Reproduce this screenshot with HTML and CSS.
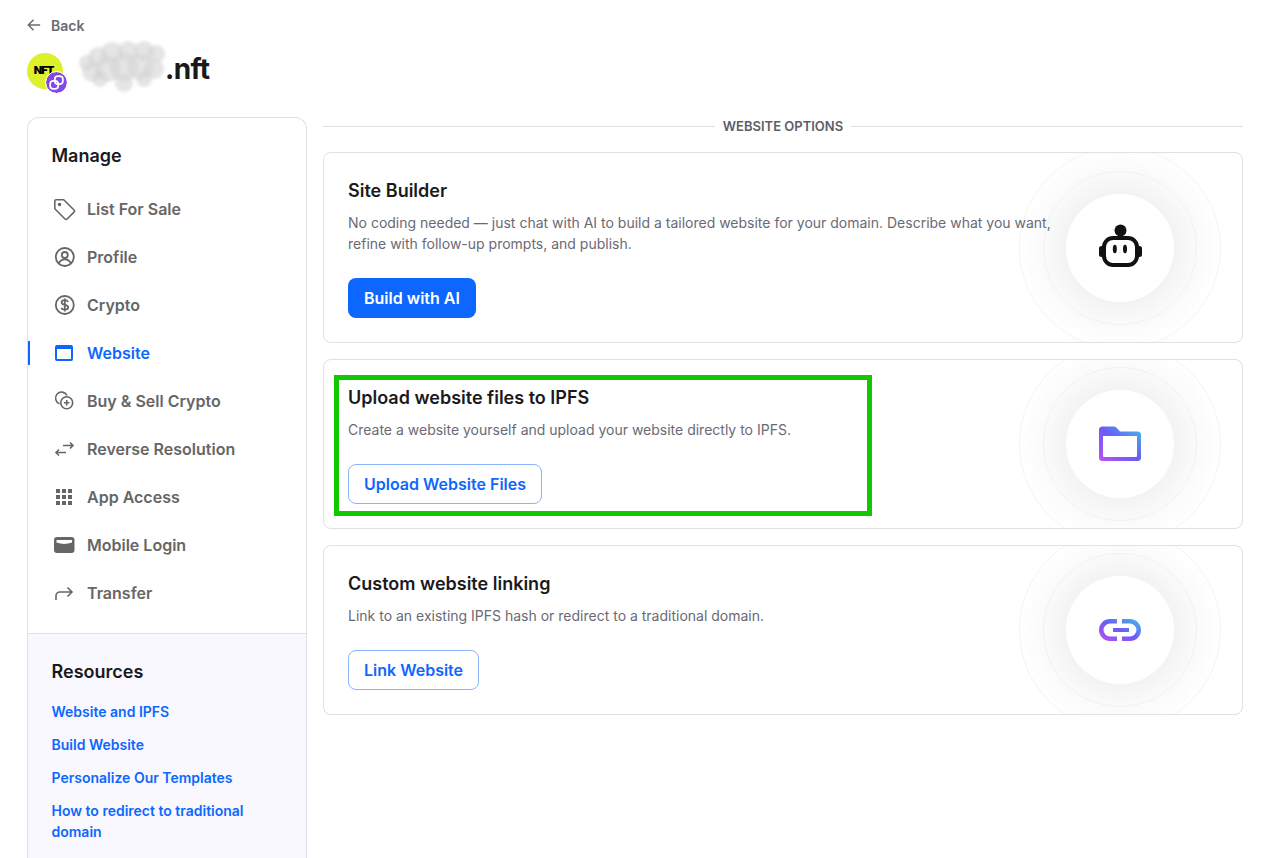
FILE: index.html
```html
<!DOCTYPE html>
<html>
  <head>
    <title>Website options</title>
    <link rel="stylesheet" href="styles.css">
  </head>
  <body>
    <div class="page">
      <a class="back">
        <svg viewBox="0 0 16 16" fill="none" stroke="currentColor" stroke-width="1.700">
          <path d="M15 8H1.500M7.500 2L1.500 8l6 6" />
        </svg>
        Back
      </a>
      <div class="domain-head">
        <span class="avatar">
          <span class="avatar-text">NFT</span>
          <span class="chain-badge">
            <svg viewBox="0 0 20 20" fill="none" stroke="#fff" stroke-width="2">
              <rect x="2.500" y="8" width="9.500" height="9.500" rx="3.800" />
              <rect x="8" y="2.500" width="9.500" height="9.500" rx="3.800" />
            </svg>
          </span>
        </span>
        <!-- blurred domain name -->
        <svg class="name-blur" viewBox="0 0 90 52">
          <g fill="#d4d4d4" fill-opacity="0.6">
            <circle cx="9" cy="22" r="8" />
            <circle cx="20" cy="16" r="10" />
            <circle cx="34" cy="12" r="11" />
            <circle cx="50" cy="10" r="10" />
            <circle cx="66" cy="10" r="10" />
            <circle cx="78" cy="13" r="9" />
            <circle cx="14" cy="31" r="10" />
            <circle cx="30" cy="28" r="13" />
            <circle cx="46" cy="26" r="14" />
            <circle cx="62" cy="26" r="13" />
            <circle cx="76" cy="28" r="10" />
            <circle cx="22" cy="38" r="8" />
            <circle cx="46" cy="42" r="9" />
            <circle cx="66" cy="38" r="8" />
          </g>
        </svg>
        <h1>.nft</h1>
      </div>

      <div class="layout">
        <aside class="sidebar">
          <div class="manage">
            <h3>Manage</h3>
            <a class="nav-item">
              <svg viewBox="0 0 24 24" fill="none" stroke="currentColor" stroke-width="1.600" stroke-linejoin="round">
                <path d="M2.800 4.300A1.500 1.500 0 0 1 4.300 2.800h7.400l10.300 10.200a1.500 1.500 0 0 1 0 2.100l-6.900 6.900a1.500 1.500 0 0 1-2.100 0L2.800 11.800z" />
                <circle cx="7.500" cy="7.500" r="1" fill="currentColor" />
              </svg>
              List For Sale
            </a>
            <a class="nav-item">
              <svg viewBox="0 0 24 24" fill="none" stroke="currentColor" stroke-width="1.800">
                <circle cx="12.800" cy="12" r="9" />
                <circle cx="12.800" cy="10" r="3" />
                <path d="M6.800 18.500c1-2.800 3.200-4.200 6-4.200s5 1.400 6 4.200" />
              </svg>
              Profile
            </a>
            <a class="nav-item">
              <svg viewBox="0 0 24 24" fill="none" stroke="currentColor" stroke-width="1.800">
                <circle cx="12.800" cy="12" r="9" />
                <path d="M16 9c-.5-1.200-1.700-1.800-3.200-1.800-1.900 0-3.200 1-3.200 2.300 0 3.300 6.600 1.500 6.600 4.800 0 1.400-1.500 2.400-3.400 2.400-1.700 0-3-.7-3.500-1.900M12.800 5.500v13" />
              </svg>
              Crypto
            </a>
            <a class="nav-item active">
              <svg viewBox="0 0 24 24" fill="currentColor">
                <path fill-rule="evenodd" d="M5 4h14a2 2 0 0 1 2 2v12a2 2 0 0 1-2 2H5a2 2 0 0 1-2-2V6a2 2 0 0 1 2-2zm0 4v9.500c0 .3.200.5.500.5h13c.3 0 .5-.2.500-.5V8z" />
              </svg>
              Website
            </a>
            <a class="nav-item">
              <svg viewBox="0 0 24 24" fill="none" stroke="currentColor" stroke-width="1.600">
                <path d="M7.500 14.700a6 6 0 1 1 7.500-8.200" />
                <circle cx="14.700" cy="13.800" r="6" />
                <path d="M14.700 11v5.600M11.900 13.800h5.600" />
              </svg>
              Buy &amp; Sell Crypto
            </a>
            <a class="nav-item">
              <svg viewBox="0 0 24 24" fill="none" stroke="currentColor" stroke-width="1.600">
                <path d="M11 8.500h10M18 5.500l3 3-3 3" />
                <path d="M14 15.500H4M7 12.500l-3 3 3 3" />
              </svg>
              Reverse Resolution
            </a>
            <a class="nav-item">
              <svg viewBox="0 0 24 24" fill="currentColor">
                <path d="M4 4h4v4H4zM10 4h4v4h-4zM16 4h4v4h-4zM4 10h4v4H4zM10 10h4v4h-4zM16 10h4v4h-4zM4 16h4v4H4zM10 16h4v4h-4zM16 16h4v4h-4z" />
              </svg>
              App Access
            </a>
            <a class="nav-item">
              <svg viewBox="0 0 24 24" fill="currentColor">
                <path fill-rule="evenodd" d="M5 4h14.500a3 3 0 0 1 3 3v10a3 3 0 0 1-3 3H5a3 3 0 0 1-3-3V7a3 3 0 0 1 3-3zM4.500 7v2.500c2.500.4 5.200 1.500 7.700 1.500s5.300-1.100 7.800-1.500V7z" />
              </svg>
              Mobile Login
            </a>
            <a class="nav-item">
              <svg viewBox="0 0 24 24" fill="none" stroke="currentColor" stroke-width="1.600">
                <path d="M4 19v-4a4 4 0 0 1 4-4h12M15.500 6.500L20 11l-4.500 4.500" />
              </svg>
              Transfer
            </a>
          </div>
          <div class="resources">
            <h3>Resources</h3>
            <a>Website and IPFS</a>
            <a>Build Website</a>
            <a>Personalize Our Templates</a>
            <a>How to redirect to traditional domain</a>
          </div>
        </aside>

        <main class="content">
          <div class="section-label"><span>WEBSITE OPTIONS</span></div>

          <section class="option-card tall">
            <div class="rings"><span class="ring-mid"></span><span class="ring-inner">
              <svg class="option-icon" viewBox="0 0 48 48">
                <circle cx="24.500" cy="6.500" r="6" fill="#111" />
                <rect x="23" y="10" width="3" height="5" fill="#111" />
                <rect x="3" y="22" width="5" height="11" rx="2.500" fill="#111" />
                <rect x="41" y="22" width="5" height="11" rx="2.500" fill="#111" />
                <rect x="8" y="14" width="33" height="27" rx="9" fill="#fff" stroke="#111" stroke-width="4" />
                <ellipse cx="18.800" cy="25" rx="2" ry="4.200" fill="#111" />
                <ellipse cx="29" cy="25" rx="2" ry="4.200" fill="#111" />
              </svg>
            </span></div>
            <div class="option-body">
              <h2>Site Builder</h2>
              <p>No coding needed — just chat with AI to build a tailored website for your domain. Describe what you want, refine with follow-up prompts, and publish.</p>
              <a class="btn primary">Build with AI</a>
            </div>
          </section>

          <section class="option-card">
            <div class="rings"><span class="ring-mid"></span><span class="ring-inner">
              <svg class="option-icon" viewBox="0 0 48 48" fill="none">
                <defs>
                  <linearGradient id="grad-folder" x1="0" y1="1" x2="1" y2="0">
                    <stop offset="0" stop-color="#c04ff0" />
                    <stop offset="0.5" stop-color="#6a5cf5" />
                    <stop offset="1" stop-color="#3fc0e8" />
                  </linearGradient>
                </defs>
                <path fill="url(#grad-folder)" fill-rule="evenodd" d="M3 10a3.500 3.500 0 0 1 3.500-3.500h11c1.200 0 2.200.5 3 1.300L24 11.500h17.500A3.500 3.500 0 0 1 45 15v22.500a3.500 3.500 0 0 1-3.500 3.500h-35A3.500 3.500 0 0 1 3 37.500zm4 6v20a1 1 0 0 0 1 1h32a1 1 0 0 0 1-1V16z" />
              </svg>
            </span></div>
            <div class="option-body">
              <h2>Upload website files to IPFS</h2>
              <p>Create a website yourself and upload your website directly to IPFS.</p>
              <a class="btn outline">Upload Website Files</a>
            </div>
            <div class="highlight"></div>
          </section>

          <section class="option-card">
            <div class="rings"><span class="ring-mid"></span><span class="ring-inner">
              <svg class="option-icon" viewBox="0 0 48 48" fill="none">
                <defs>
                  <linearGradient id="grad-link" x1="0" y1="1" x2="1" y2="0">
                    <stop offset="0" stop-color="#c04ff0" />
                    <stop offset="0.5" stop-color="#6a5cf5" />
                    <stop offset="1" stop-color="#3fc0e8" />
                  </linearGradient>
                </defs>
                <path fill="url(#grad-link)" d="M14 13h7v4.500h-7a6.500 6.500 0 0 0 0 13h7V35h-7a11 11 0 0 1 0-22zM26 13h8a11 11 0 0 1 0 22h-8v-4.500h8a6.500 6.500 0 0 0 0-13h-8zM17 22h16v4H17z" />
              </svg>
            </span></div>
            <div class="option-body">
              <h2>Custom website linking</h2>
              <p>Link to an existing IPFS hash or redirect to a traditional domain.</p>
              <a class="btn outline">Link Website</a>
            </div>
          </section>
        </main>
      </div>
    </div>
  </body>
</html>
```

FILE: styles.css
```css
:root {
  --blue: #0d67fe;
  --border: #e0e0e6;
  --text: #1a1a1c;
  --text-light: #6a6a75;
  --nav: #666666;
}

html,
body {
  height: 100%;
  margin: 0;
  background: #fff;
  font-family: "Inter", "Liberation Sans", sans-serif;
  color: var(--text);
}

.page {
  display: flex;
  flex-direction: column;
  height: 100vh;
  box-sizing: border-box;
  padding: 15px 34px 0 27px;
}

.back {
  display: flex;
  align-items: center;
  gap: 10px;
  height: 20px;
  font-size: 14px;
  font-weight: 600;
  color: var(--text-light);
}
.back svg {
  width: 14px;
  height: 14px;
}

.domain-head {
  display: flex;
  align-items: center;
  height: 48px;
  margin-top: 10px;
}
.domain-head h1 {
  margin: 0;
  font-size: 28px;
  line-height: 48px;
  font-weight: 700;
  letter-spacing: -0.7px;
}

.avatar {
  position: relative;
  flex: none;
  display: flex;
  align-items: center;
  justify-content: center;
  width: 36px;
  height: 36px;
  border-radius: 50%;
  background: #dcf12c;
  margin-top: 4px;
}
.avatar-text {
  font-size: 11px;
  font-weight: 900;
  letter-spacing: -1px;
  color: #000;
  margin-right: 3px;
  margin-top: -2px;
}
.chain-badge {
  position: absolute;
  right: -4px;
  bottom: -4px;
  display: flex;
  width: 21px;
  height: 21px;
  padding: 2px;
  box-sizing: border-box;
  border-radius: 50%;
  background: #8247e5;
  outline: 1px solid #fff;
}

.name-blur {
  flex: none;
  width: 90px;
  height: 52px;
  margin: -4px -3px 0 15px;
  filter: blur(1.5px);
}

.layout {
  flex: 1;
  min-height: 0;
  display: flex;
  align-items: flex-start;
  gap: 16px;
  margin-top: 24px;
}

/* the panel runs on past the bottom of the window */
.sidebar {
  flex: none;
  align-self: stretch;
  display: flex;
  flex-direction: column;
  width: 278px;
  border: 1px solid var(--border);
  border-bottom: none;
  border-radius: 12px 12px 0 0;
  overflow: hidden;
}

.sidebar h3 {
  margin: 0;
  font-size: 18px;
  line-height: 24px;
  font-weight: 600;
}

.manage {
  padding: 26px 0 16px;
}
.manage h3 {
  padding-left: 23.5px;
  margin-bottom: 17px;
}

.nav-item {
  display: flex;
  align-items: center;
  gap: 11px;
  height: 48px;
  padding-left: 24px;
  font-size: 16px;
  font-weight: 600;
  color: var(--nav);
}
.nav-item svg {
  width: 24px;
  height: 24px;
  flex: none;
}
.nav-item.active {
  color: var(--blue);
  box-shadow: inset 2px 0 0 var(--blue);
  height: 24px;
  margin: 12px 0;
}

.resources {
  flex: 1;
  display: flex;
  flex-direction: column;
  gap: 12px;
  padding: 26px 23.5px 0;
  border-top: 1px solid var(--border);
  background: #f8f8fe;
}
.resources h3 {
  margin-bottom: 5px;
}
.resources a {
  font-size: 14px;
  line-height: 21px;
  font-weight: 600;
  color: var(--blue);
}

.content {
  flex: 1;
  display: flex;
  flex-direction: column;
  gap: 16px;
}

.section-label {
  display: flex;
  align-items: center;
  gap: 8px;
  height: 18px;
  margin-bottom: 1px;
  font-size: 13px;
  font-weight: 600;
  color: #5e5e66;
}
.section-label::before,
.section-label::after {
  content: "";
  flex: 1;
  height: 1px;
  background: var(--border);
}

.option-card {
  position: relative;
  overflow: hidden;
  height: 168px;
  border: 1px solid var(--border);
  border-radius: 8px;
}
.option-card.tall {
  height: 189px;
}

.option-body {
  position: relative;
  padding: 24px;
  width: 710px;
}
.option-body h2 {
  margin: 0 0 8px;
  font-size: 18px;
  line-height: 27px;
  font-weight: 600;
}
.option-body p {
  margin: 0 0 24px;
  font-size: 14px;
  line-height: 21px;
  color: var(--text-light);
}

.btn {
  display: inline-flex;
  align-items: center;
  height: 40px;
  padding: 0 15px;
  box-sizing: border-box;
  border: 1px solid transparent;
  border-radius: 8px;
  font-size: 16px;
  font-weight: 600;
}
.btn.primary {
  background: var(--blue);
  color: #fff;
}
.btn.outline {
  border-color: #8ab4fb;
  color: var(--blue);
}

/* circles behind the card icon */
.rings {
  position: absolute;
  top: 50%;
  right: 21px;
  width: 200px;
  height: 200px;
  margin-top: -101px;
  border: 1px solid #f3f3f3;
  border-radius: 50%;
  display: flex;
  align-items: center;
  justify-content: center;
  background: radial-gradient(circle closest-side, #f3f3f3 54%, #fafafa 76%, #fff 100%);
}
.ring-mid {
  position: absolute;
  width: 152px;
  height: 152px;
  border: 1px solid #f1f1f1;
  border-radius: 50%;
}
.ring-inner {
  position: relative;
  display: flex;
  align-items: center;
  justify-content: center;
  width: 108px;
  height: 108px;
  border-radius: 50%;
  background: #fff;
}
.option-icon {
  width: 48px;
  height: 48px;
}

/* green annotation box around the upload block */
.highlight {
  position: absolute;
  left: 10px;
  top: 15px;
  width: 538px;
  height: 141px;
  box-sizing: border-box;
  border: 5px solid #12c800;
}
```
